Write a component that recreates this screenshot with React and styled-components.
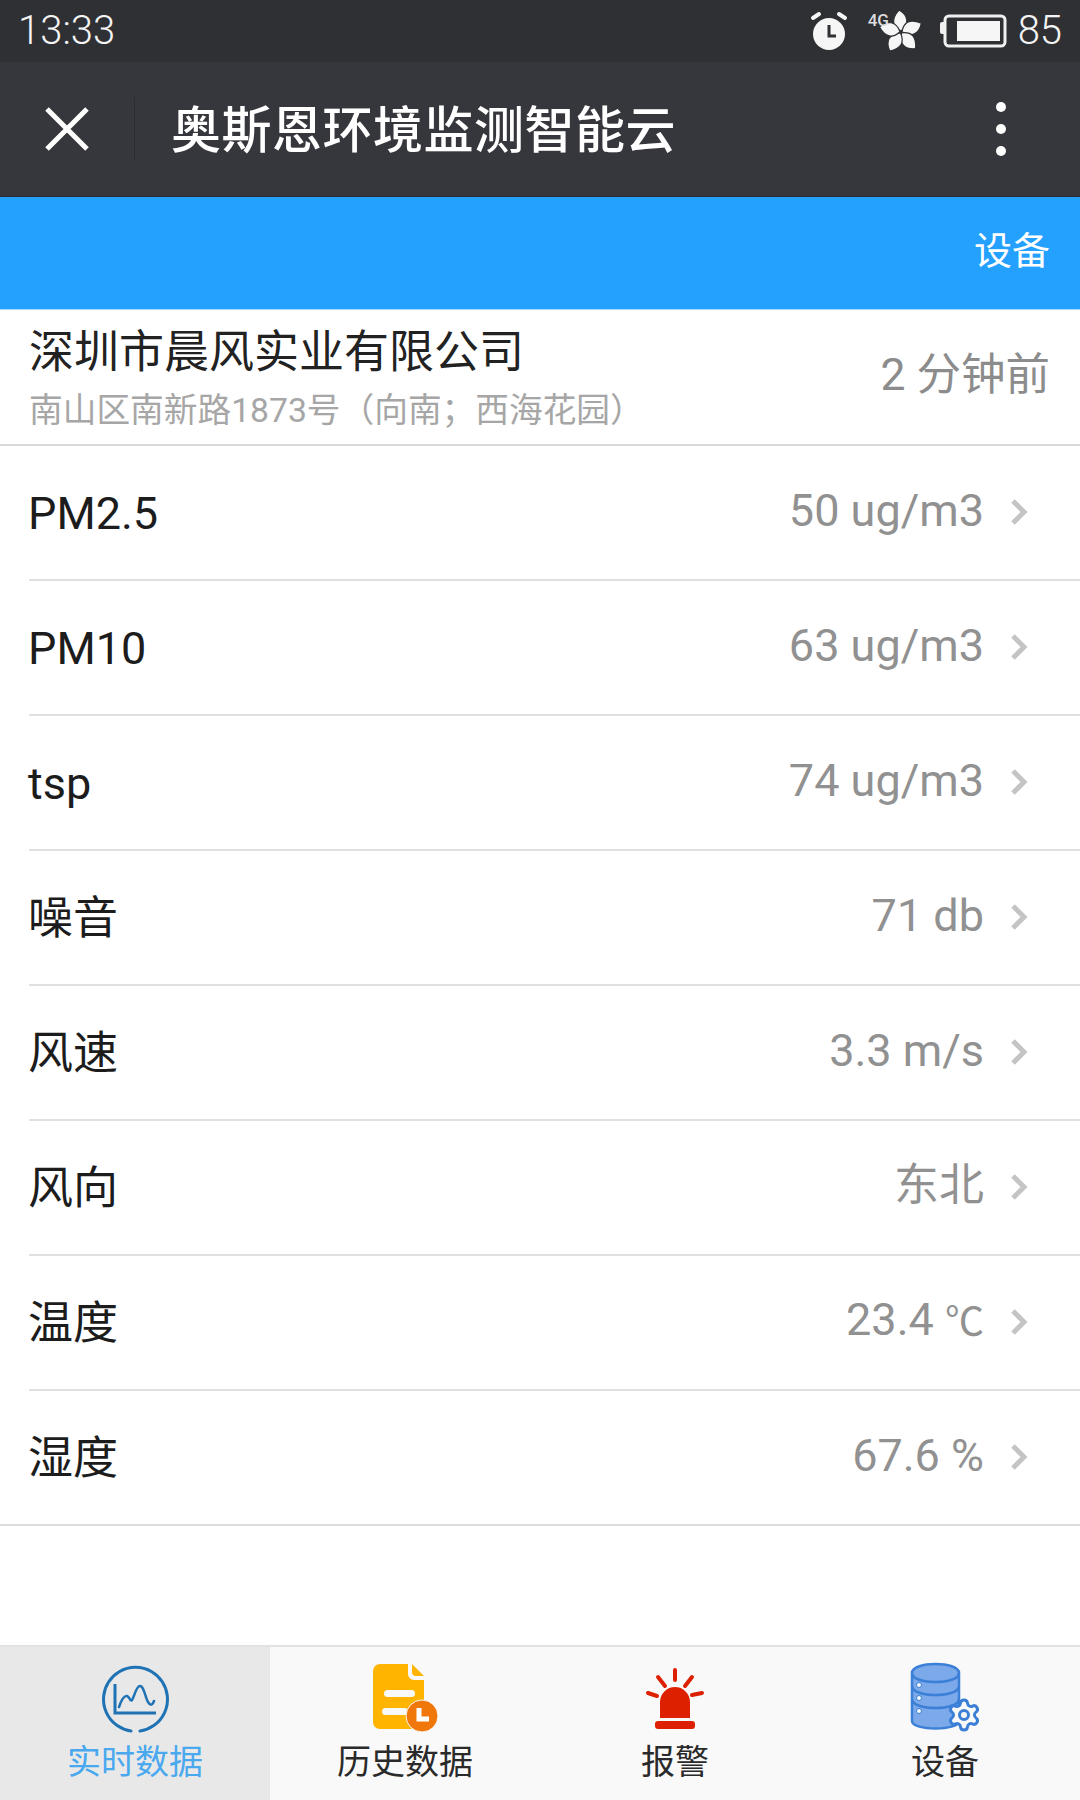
import React from 'react';
import styled, { createGlobalStyle } from 'styled-components';
import { Settings } from 'lucide-react';

const GlobalStyle = createGlobalStyle`
  html, body {
    margin: 0;
    padding: 0;
    background: #ffffff;
  }
  * {
    box-sizing: border-box;
  }
`;

const Page = styled.div`
  display: flex;
  flex-direction: column;
  height: 1800px;
  overflow: hidden;
  font-family: Roboto, "Noto Sans CJK SC", sans-serif;
  background: #ffffff;
`;

const StatusBar = styled.div`
  display: flex;
  align-items: center;
  height: 62px;
  padding: 0 18px;
  background: #2f3034;
  color: #f4f4f4;
`;

const StatusText = styled.span`
  font-size: 40px;
  font-weight: 300;
  line-height: 62px;
  margin-left: ${(p) => p.$gap || 0}px;
`;

const StatusIcons = styled.div`
  display: flex;
  align-items: center;
  margin-left: auto;
`;

const NetworkIcon = styled.div`
  position: relative;
  width: 54px;
  height: 44px;
  margin: 0 17px 0 17px;
`;

const NetworkLabel = styled.span`
  position: absolute;
  left: 0;
  top: 3px;
  font-size: 17px;
  font-weight: 500;
  line-height: 17px;
  color: #dddddd;
`;

const FlowerSvg = styled.svg`
  position: absolute;
  left: 0;
  top: 0;
`;

const NavBar = styled.div`
  display: flex;
  align-items: center;
  height: 135px;
  background: #36373c;
  border-bottom: 1px solid #2b2c2f;
`;

const CloseButton = styled.div`
  display: flex;
  align-items: center;
  justify-content: center;
  width: 135px;
  height: 64px;
  border-right: 1px solid #2c2d30;
`;

const NavTitle = styled.h1`
  flex: 1;
  margin: 0 0 6px 36px;
  font-size: 50px;
  font-weight: 500;
  letter-spacing: 0.5px;
  color: #ffffff;
  white-space: nowrap;
`;

const MoreButton = styled.div`
  display: flex;
  flex-direction: column;
  gap: 12px;
  margin-right: 74px;
`;

const Dot = styled.span`
  width: 10px;
  height: 10px;
  border-radius: 50%;
  background: #ffffff;
`;

const BlueBar = styled.div`
  display: flex;
  align-items: center;
  justify-content: flex-end;
  height: 113px;
  padding: 0 30px 12px 0;
  background: #24a0ff;
  border-bottom: 1px solid #a8d8ff;
  color: #ffffff;
  font-size: 38px;
`;

const SiteHeader = styled.div`
  display: flex;
  justify-content: space-between;
  align-items: center;
  height: 136px;
  padding: 0 30px 0 29px;
  border-bottom: 2px solid #d9d9d9;
`;

const SiteInfo = styled.div`
  display: flex;
  flex-direction: column;
  padding-top: 4px;
`;

const SiteName = styled.div`
  font-size: 45px;
  line-height: 54px;
  color: #222222;
`;

const SiteAddress = styled.div`
  margin-top: 9px;
  font-size: 33.7px;
  line-height: 44px;
  color: #a6a6a6;
`;

const UpdatedAt = styled.div`
  font-size: 44.5px;
  line-height: 60px;
  margin-bottom: 4px;
  color: #8c8c8c;
`;

const List = styled.div`
  border-bottom: 2px solid #dcdcdc;
`;

const Row = styled.div`
  padding-left: 29px;
`;

const RowInner = styled.div`
  display: flex;
  align-items: center;
  height: ${(p) => (p.$last ? '133px' : '135px')};
  padding-right: 52px;
  border-bottom: ${(p) => (p.$last ? 'none' : '2px solid #e0e0e0')};
`;

const RowLabel = styled.span`
  flex: 1;
  margin-left: -1px;
  padding-top: 3px;
  font-size: 45px;
  line-height: 60px;
  color: #1c1c1c;
`;

const RowValue = styled.span`
  font-size: 45px;
  line-height: 60px;
  color: #919191;
  margin-top: -4px;
`;

const ValueUnit = styled.span`
  font-size: 39px;
`;

const Chevron = styled.svg`
  width: 18px;
  height: 30px;
  margin: -2px 0 0 26px;
`;

const TabBar = styled.div`
  display: grid;
  grid-template-columns: repeat(4, 270px);
  height: 155px;
  margin-top: auto;
  background: #f9f9f9;
  border-top: 2px solid #e2e2e2;
`;

const Tab = styled.div`
  display: flex;
  flex-direction: column;
  align-items: center;
  padding-top: 14px;
  background: ${(p) => (p.$active ? '#e8e8e8' : 'transparent')};
`;

const TabIcon = styled.svg`
  width: 80px;
  height: 80px;
  display: block;
`;

const TabLabel = styled.span`
  font-size: 34px;
  line-height: 44px;
  margin-top: -1px;
  color: ${(p) => (p.$active ? '#4aa8ee' : '#2a2a2a')};
`;

const readings = [
  { label: 'PM2.5', value: '50 ug/m3' },
  { label: 'PM10', value: '63 ug/m3' },
  { label: 'tsp', value: '74 ug/m3' },
  { label: '噪音', value: '71 db' },
  { label: '风速', value: '3.3 m/s' },
  { label: '风向', value: '东北' },
  { label: '温度', value: '23.4 ', unit: '℃' },
  { label: '湿度', value: '67.6 %' },
];

const AlarmIcon = () => (
  <svg width="44" height="44" viewBox="0 0 44 44">
    <circle cx="22" cy="25" r="16" fill="#f6f6f6" />
    <path d="M22 16v11h7" fill="none" stroke="#2f3034" strokeWidth="3" />
    <path d="M6 9l6-4M38 9l-6-4" stroke="#f6f6f6" strokeWidth="4" strokeLinecap="round" />
  </svg>
);

const FlowerIcon = () => (
  <FlowerSvg width="54" height="44" viewBox="0 0 54 44">
    {[0, 72, 144, 216, 288].map((a) => (
      <path
        key={a}
        d="M0 -1C-9 -6 -10 -13 -2 -22C7 -17 9 -8 0 -1z"
        fill="#f6f6f6"
        stroke="#2f3034"
        strokeWidth="1.2"
        transform={`translate(33 23) rotate(${a})`}
      />
    ))}
  </FlowerSvg>
);

const BatteryIcon = () => (
  <svg width="68" height="34" viewBox="0 0 68 34">
    <rect x="1" y="8" width="6" height="12" rx="2" fill="#f0f0f0" />
    <rect x="6" y="2" width="60" height="30" rx="4" fill="none" stroke="#f0f0f0" strokeWidth="3" />
    <rect x="18" y="7" width="43" height="20" fill="#f6f6f6" />
  </svg>
);

const ChartTab = () => (
  <TabIcon viewBox="0 0 80 80">
    <path
      d="M36 70A32 32 0 1 1 45 70"
      fill="none"
      stroke="#1f73b5"
      strokeWidth="3"
      strokeLinecap="round"
    />
    <path d="M20 23v29h41" fill="none" stroke="#1f73b5" strokeWidth="3" />
    <path
      d="M24 46c2-6 5-12 8-11s3 6 5 4s4-14 8-14s5 11 8 16s5 2 6-1"
      fill="none"
      stroke="#1f73b5"
      strokeWidth="2.5"
      strokeLinecap="round"
    />
  </TabIcon>
);

const HistoryTab = () => (
  <TabIcon viewBox="0 0 80 80">
    <path
      d="M15 3h28v10a6 6 0 0 0 6 6h10v42a7 7 0 0 1-7 7H15a7 7 0 0 1-7-7V10a7 7 0 0 1 7-7z"
      fill="#ffb400"
    />
    <path d="M47 3l12 12h-8a4 4 0 0 1-4-4z" fill="#ffb400" />
    <rect x="19" y="29" width="31" height="7" rx="3.5" fill="#f9f9f9" />
    <rect x="17" y="47" width="26" height="7" rx="3.5" fill="#f9f9f9" />
    <circle cx="57" cy="55" r="16" fill="#f0780a" stroke="#f9f9f9" strokeWidth="1" />
    <path d="M54 47v11h10" fill="none" stroke="#ffffff" strokeWidth="5" />
  </TabIcon>
);

const AlarmTab = () => (
  <TabIcon viewBox="0 0 80 80">
    <path d="M25 57V41a15 15 0 0 1 30 0v16z" fill="#dd2100" />
    <rect x="20" y="60" width="40" height="8" rx="3" fill="#dd2100" />
    <path
      d="M40 9v10M23 16l7 9M57 16l-7 9M13 32l9 3M67 32l-10 2"
      stroke="#dd2100"
      strokeWidth="4"
      strokeLinecap="round"
    />
  </TabIcon>
);

const DeviceTab = () => (
  <TabIcon viewBox="0 0 80 80">
    <path
      d="M7 12c0-12 47-12 47 0v48c0 10-47 10-47 0z"
      fill="#7ba9ea"
      stroke="#3c7fd6"
      strokeWidth="2.5"
    />
    <path d="M7 12c0 12 47 12 47 0" fill="none" stroke="#3c7fd6" strokeWidth="2.5" />
    <path d="M7 25c0 12 47 12 47 0M7 38c0 12 47 12 47 0" fill="none" stroke="#3c7fd6" strokeWidth="2.5" />
    <circle cx="14" cy="24" r="2.5" fill="#f9f9f9" stroke="#3c7fd6" />
    <circle cx="14" cy="37" r="2.5" fill="#f9f9f9" stroke="#3c7fd6" />
    <circle cx="14" cy="50" r="2.5" fill="#f9f9f9" stroke="#3c7fd6" />
    <Settings x={41} y={36} width={36} height={36} fill="#f9f9f9" stroke="#3c7fd6" strokeWidth={2} />
  </TabIcon>
);

const tabs = [
  { label: '实时数据', Icon: ChartTab, active: true },
  { label: '历史数据', Icon: HistoryTab },
  { label: '报警', Icon: AlarmTab },
  { label: '设备', Icon: DeviceTab },
];

const App = () => {
  return (
    <Page>
      <GlobalStyle />
      <StatusBar>
        <StatusText>13:33</StatusText>
        <StatusIcons>
          <AlarmIcon />
          <NetworkIcon>
            <FlowerIcon />
            <NetworkLabel>4G</NetworkLabel>
          </NetworkIcon>
          <BatteryIcon />
          <StatusText $gap={11}>85</StatusText>
        </StatusIcons>
      </StatusBar>
      <NavBar>
        <CloseButton>
          <svg width="44" height="44" viewBox="0 0 44 44">
            <path d="M2 2l40 40M42 2L2 42" stroke="#ffffff" strokeWidth="5" />
          </svg>
        </CloseButton>
        <NavTitle>奥斯恩环境监测智能云</NavTitle>
        <MoreButton>
          <Dot />
          <Dot />
          <Dot />
        </MoreButton>
      </NavBar>
      <BlueBar>设备</BlueBar>
      <SiteHeader>
        <SiteInfo>
          <SiteName>深圳市晨风实业有限公司</SiteName>
          <SiteAddress>南山区南新路1873号（向南；西海花园）</SiteAddress>
        </SiteInfo>
        <UpdatedAt>2 分钟前</UpdatedAt>
      </SiteHeader>
      <List>
        {readings.map((r, i) => (
          <Row key={r.label}>
            <RowInner $last={i === readings.length - 1}>
              <RowLabel>{r.label}</RowLabel>
              <RowValue>
                {r.value}
                {r.unit && <ValueUnit>{r.unit}</ValueUnit>}
              </RowValue>
              <Chevron viewBox="0 0 18 30">
                <path d="M3 4l11 11L3 26" fill="none" stroke="#c4c4c4" strokeWidth="5" />
              </Chevron>
            </RowInner>
          </Row>
        ))}
      </List>
      <TabBar>
        {tabs.map(({ label, Icon, active }) => (
          <Tab key={label} $active={active}>
            <Icon />
            <TabLabel $active={active}>{label}</TabLabel>
          </Tab>
        ))}
      </TabBar>
    </Page>
  );
};

export default App;
